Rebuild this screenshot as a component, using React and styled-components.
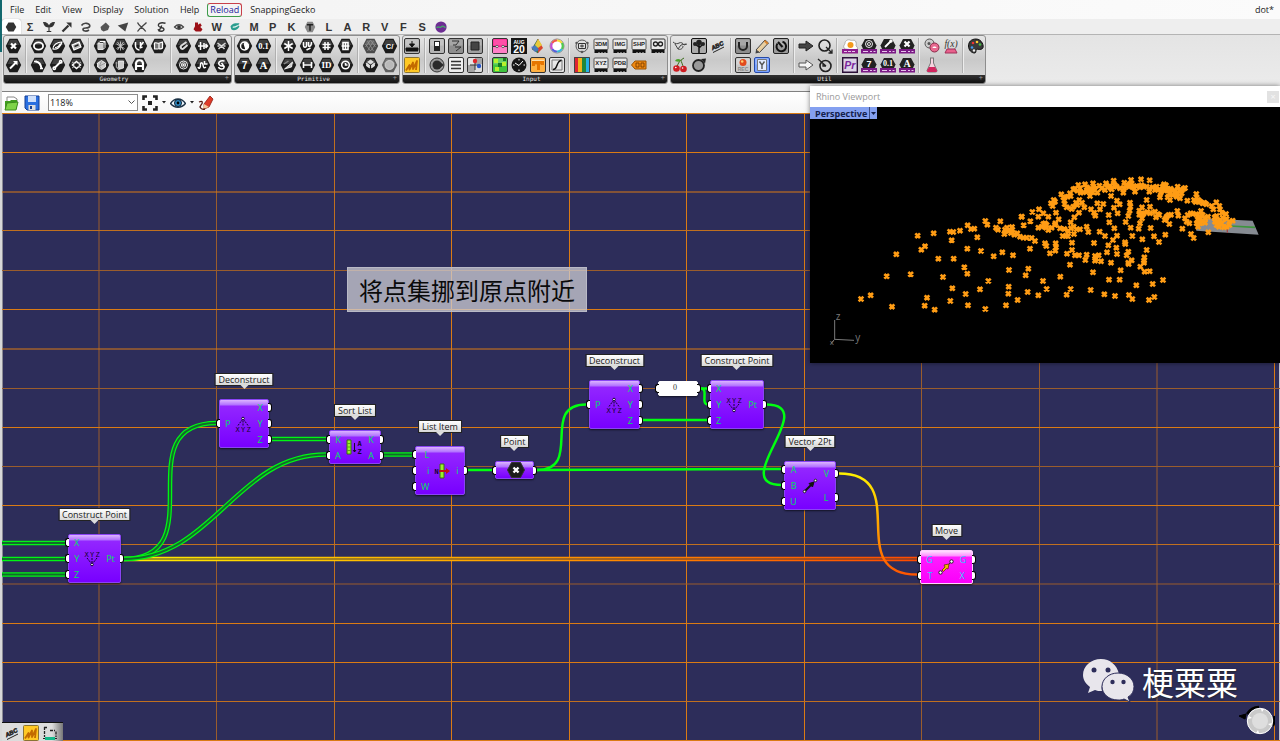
import React from "react";
import styled, { createGlobalStyle, css } from "styled-components";

const GlobalStyle = createGlobalStyle`
  * {
    box-sizing: border-box;
  }
  body {
    margin: 0;
    font-family: "Open Sans", "Noto Sans", "Noto Sans CJK SC", sans-serif;
    font-size: 9px;
    color: #1c1c1c;
  }
  button {
    padding: 0;
    border: 0;
    background: none;
    font: inherit;
    color: inherit;
  }
`;

/* ---------- icon bases ---------- */

const Hex = ({ children, fill = "#1b1b1b" }) => (
  <svg width="17" height="16" viewBox="0 0 16 16">
    <path d="M.3 8 4 .8h8L15.700 8 12 15.200H4z" fill={fill} />
    <path d="M2 7 4.600 2h6.800L14 7z" fill="#fff" opacity=".16" />
    <g fill="none" stroke="#fff" strokeWidth="1.500">
      {children}
    </g>
  </svg>
);

const Tile = ({ children, fill = "#b4b4b4", edge = "#333" }) => (
  <svg width="16" height="16" viewBox="0 0 16 16">
    <rect x=".5" y=".5" width="15" height="15" rx="1.500" fill={fill} stroke={edge} />
    <rect x="1.500" y="1.500" width="13" height="6" fill="#fff" opacity=".22" />
    {children}
  </svg>
);

const Chip = ({ label }) => (
  <svg width="16" height="16" viewBox="0 0 16 16">
    <path d="M1.500 11h13v4h-2v-1h-1v1h-2v-1h-1v1h-2v-1h-1v1h-4z" fill="#111" />
    <rect x="1" y="1" width="14" height="10.500" rx="1" fill="#e9e9e9" stroke="#555" />
    <text x="8" y="8.300" fontSize="5.800" fontWeight="700" textAnchor="middle" fontFamily="Liberation Sans, sans-serif" fill="#222">
      {label}
    </text>
  </svg>
);

const Plug = ({ children }) => (
  <svg width="16" height="16" viewBox="0 0 16 16">
    <path d="M.5 7.500 4 1h8l3.500 6.500L14 11H2z" fill="#222" />
    <g fill="none" stroke="#fff" strokeWidth="1.400">
      {children}
    </g>
    <path d="M0 11h16v4.500H0z" fill="#7b1a86" />
    <path d="M2 13.500h5M9 13.500h2M12.500 13.500h2" stroke="#e6c6ea" />
  </svg>
);

const Plain = ({ children, size = 16 }) => (
  <svg width={size} height={size} viewBox="0 0 16 16" fill="none">
    {children}
  </svg>
);

const Glyph = ({ children, y = 11.5, size = 10, serif }) => (
  <text
    x="8"
    y={y}
    fontSize={size}
    fontWeight="700"
    textAnchor="middle"
    fontFamily={serif ? "Liberation Serif, serif" : "Liberation Sans, sans-serif"}
    fill="#fff"
    stroke="none"
  >
    {children}
  </text>
);

const AutoMark = () => (
  <Plain>
    <rect x=".5" y=".5" width="15" height="15" rx="1" fill="#ffc824" stroke="#8a7434" />
    <path d="M2 13.500 5.500 8v4.500L9 5.500v6.500L13 4l-1 9" stroke="#c26a00" strokeWidth="1.800" strokeLinejoin="round" />
  </Plain>
);

const AbcMark = () => (
  <Plain>
    <text x="2" y="11.500" fontSize="6" fontStyle="italic" fontWeight="700" fontFamily="Liberation Sans, sans-serif" fill="#222" stroke="#222" strokeWidth=".5" transform="rotate(-26 4 11)">
      ABC
    </text>
    <path d="m3 14.500 11-5.500" stroke="#222" />
  </Plain>
);

/* ---------- ribbon contents: name -> drawing ---------- */

const icons = {
  Point: <Hex><path d="m5.500 5.500 5 5m0-5-5 5" strokeWidth="2.200" /></Hex>,
  Vector: <Hex><path d="m4.500 11.500 6-6" strokeWidth="2" /><path d="M7.500 4h4.500v4.500z" fill="#fff" stroke="none" /></Hex>,
  Circle: <Hex><ellipse cx="8" cy="8" rx="4.600" ry="3.600" strokeWidth="1.800" /></Hex>,
  "Circular Arc": <Hex><path d="M5 4.500c4 .5 5.500 3 6 7" strokeWidth="2" /><path d="M3.500 4.500h3M9.500 11.500h3" /></Hex>,
  Curve: <Hex><path d="M3.500 11c0-4 4-7 9-7-1 5-5 8-9 7zm2-1.500c2 0 4.500-2 5.500-4" strokeWidth="1.200" /></Hex>,
  Line: <Hex><path d="m5 11 6-6" strokeWidth="2" /><circle cx="4.800" cy="11.200" r="1.200" /><circle cx="11.200" cy="4.800" r="1.200" /></Hex>,
  Plane: <Hex><path d="m3.500 7 7-3 2 5-7 3z" fill="#bbb" strokeWidth="1.200" /><path d="m6 8.500 4-1.700" stroke="#222" /></Hex>,
  Rectangle: <Hex><path d="m8 4.500 4 3.500-4 3.500L4 8z" /><path d="m3.500 5 3 2m6 4-3-2m-6 2 3-2m6-4-3 2" strokeWidth="1" stroke="#bbb" /></Hex>,
  Box: <Hex><path d="M4.500 5.500h5v6h-5zl2-2h5v6l-2 2m0-6 2-2" strokeWidth="1" /><path d="M4.500 5.500h5v6h-5z" fill="#ccc" stroke="none" /></Hex>,
  Brep: <Hex><path d="m8 3.500 4 2.500v4l-4 2.500L4 10V6z" fill="#ccc" strokeWidth=".8" /><path d="m8 4-2 5 2 3.500M12 6 6 9" stroke="#888" strokeWidth=".7" /></Hex>,
  Mesh: <Hex><path d="M8 3.500v9M4 6l8 4.500M12 6l-8 4.500M5 4l6 8M11 4l-6 8" strokeWidth=".9" stroke="#ccc" /></Hex>,
  "Mesh Face": <Hex><path d="M6 4h5v7l-5 1.500z" fill="#ccc" strokeWidth=".7" /><path d="M4 5v5l2 2" stroke="#999" /></Hex>,
  SubD: <Hex><path d="M4 4v4c0 3 3 4 4 4m1-8v4l3-4m-4 6 3-1" /></Hex>,
  Surface: <Hex><path d="M4.500 13V7c0-5 7-5 7 0v6m-7-4h7" strokeWidth="2.200" /></Hex>,
  "Twisted Box": <Hex><path d="M4 5c2-1 3 1 5 0l3-1v6c-2 2-3 0-5 1H4zm4.500 0v6" fill="#777" strokeWidth="1.200" /></Hex>,
  Field: <Hex><path d="M11 4 6 7.500C4 9 6 12 8 10.500L12 7" strokeWidth="2" stroke="#ddd" /></Hex>,
  Spiral: <Hex><circle cx="8" cy="8" r="4" strokeWidth=".9" /><circle cx="8" cy="8" r="2.200" strokeWidth=".9" /><circle cx="8" cy="8" r=".5" /></Hex>,
  Geometry: <Hex><path d="M3.500 8h9M6 4v8M9.500 5v6M11 6l2 2-2 2" strokeWidth="1.500" /></Hex>,
  "Geometry Cache": <Hex><path d="M3.500 10c1 2.500 2.500 1 2.500-2s2-3 2.500 0 1 3.500 3 2M10 4v3h3" strokeWidth="1.500" /></Hex>,
  Group: <Hex><path d="m4 5 4 3 4-3M5 11l3-3 3 3M4 8h2m4 0h2" strokeWidth="1.500" stroke="#ddd" /></Hex>,
  Transform: <Hex><path d="M11 4c-5-1-7 2-5 4s5 0 4.500 2.500S5.500 12 5 10M8 6l3 4" strokeWidth="1.500" /></Hex>,
  Boolean: <Hex><circle cx="8" cy="8" r="4" /><path d="M8 4a4 4 0 0 1 0 8c2-2-2-4 0-8" fill="#fff" stroke="none" /></Hex>,
  Integer: <Hex><Glyph>7</Glyph></Hex>,
  Number: <Hex><Glyph serif size={8.500} y={10.8}>0.1</Glyph></Hex>,
  Text: <Hex><Glyph serif size={11}>A</Glyph></Hex>,
  Colour: <Hex><path d="M8 3v10M3.800 5.500l8.400 5M12.200 5.500l-8.400 5" strokeWidth="1.500" /></Hex>,
  "Complex Number": <Hex><path d="m4 12 8-7-1 5z" fill="#ccc" strokeWidth=".8" /><path d="M3.500 7 8 4" stroke="#888" /></Hex>,
  Culture: <Hex><path d="M4 4v3c0 3 3 3 3 0V4m2 0v4c2 1 3-1 3-4M7 12l4-2" strokeWidth="1.500" /></Hex>,
  Domain: <Hex><path d="M4 8h8M4 5v6m8-6v6" strokeWidth="1.600" /></Hex>,
  Matrix: <Hex><path d="M6.500 4v8M9.500 4v8M4 6.500h8m-8 3h8" /></Hex>,
  Guid: <Hex><Glyph serif size={9} y={11}>ID</Glyph></Hex>,
  "Domain²": <Hex><path d="M5.500 4.500h5v7h-5zM4 8h8M8 4v8" strokeWidth="1.600" /></Hex>,
  Time: <Hex><circle cx="8" cy="8" r="3.800" /><path d="M8 6v2h2" /></Hex>,
  Shader: <Hex fill="#4b4b4b"><path d="m3 6 5 7M5 3l6 10M8 2l5 7M13 6l-5 7M11 3 5 13M8 2 3 9" strokeWidth=".7" stroke="#999" /></Hex>,
  Data: <Hex><path d="m8 3 3 2-3 2-3-2zM4 6l3 2v3L4 9zm8 0L9 8v3l3-2z" fill="#ddd" strokeWidth=".6" /></Hex>,
  "File Path": <Hex><Glyph size={7.5} y={10.6}>C/</Glyph></Hex>,
  Sphere: <Hex fill="#606060"><circle cx="8" cy="8" r="4.500" fill="#b9b9b9" stroke="#ddd" strokeWidth=".8" /></Hex>,

  "Item Picker": <Tile><path d="M8 3v5M5.500 6 8 9l2.500-3z" stroke="#111" fill="#111" /><path d="M2 10h12v2.500H2zM3 12.500v1.500m2-1.500V14m2-1.500V14m2-1.500V14m2-1.500V14m2-1.500V14" stroke="#111" fill="#111" /></Tile>,
  Scribble: <AutoMark />,
  "Boolean Toggle": <Tile><path d="M5 3h6v10H5z" fill="#222" /><path d="M6 4h4v4H6z" fill="#fff" /></Tile>,
  "Control Knob": <Plain><circle cx="8" cy="8" r="7" fill="#9a9a9a" stroke="#333" /><circle cx="8" cy="8" r="4.500" fill="#2a2a2a" /><path d="m11 5 4 3-4 3z" fill="#2a2a2a" /></Plain>,
  "Digit Scroller": <Tile fill="#8e8e8e"><path d="M4 3h7L8 7H5m2 2h6l-5 4" stroke="#333" fill="none" /></Tile>,
  Panel: <Tile fill="#eee"><path d="M3 4.500h10M3 8h10M3 11.500h10" stroke="#333" strokeWidth="1.400" /></Tile>,
  Button: <Tile fill="#a0a0a0"><path d="M4 4h8v8H4z" fill="#444" stroke="#222" /></Tile>,
  "MD Slider": <Tile fill="#ddd"><path d="M1 8h7v7H1zM8 1h7v6H8z" fill="#a6a6a6" /><path d="M8 3v10M3 8h10" stroke="#333" /><circle cx="8" cy="4" r="2.200" fill="#e0262b" /><circle cx="12" cy="9" r="2.200" fill="#2453c9" /></Tile>,
  Gradient: <Tile fill="#ff1f90"><path d="M1 9h14v6H1z" fill="#ff7fc6" /><path d="M1 8.500h3m8 0h3" stroke="#333" fill="none" /><circle cx="5" cy="8.500" r="1.200" fill="#fff" stroke="#333" strokeWidth=".7" /><circle cx="11" cy="8.500" r="1.200" fill="#fff" stroke="#333" strokeWidth=".7" /></Tile>,
  "Colour Picker": <Tile fill="#3fc43f"><path d="M2 2h4v4H2zm8 3h4v4h-4zM3 10h4v4H3z" fill="#b6f22c" /><path d="M6 6h4v4H6zm5-5h3v3h-3z" fill="#167c22" /></Tile>,
  Calendar: <Plain><path d="M0 0h16v16H0z" fill="#161616" /><text x="8" y="5.500" fontSize="5" fontWeight="700" textAnchor="middle" fill="#fff" fontFamily="Liberation Sans, sans-serif">AUG</text><text x="8" y="14.500" fontSize="10.500" fontWeight="700" textAnchor="middle" fill="#fff" fontFamily="Liberation Sans, sans-serif">20</text></Plain>,
  Clock: <Plain><circle cx="8" cy="8" r="7.500" fill="#161616" /><path d="M4 6l4 2.500L12 4M8 2v1.500M8 12.500V14M2 8h1.500M12.500 8H14" stroke="#fff" /></Plain>,
  "Colour Swatch": <Plain><path d="M8 1 2 11l6 4z" fill="#36a845" stroke="#333" strokeWidth=".6" /><path d="m8 1 5 9-5 5z" fill="#d8442c" /><path d="m1 9 5-2 3 5-4 2z" fill="#4c72d8" opacity=".8" /><path d="m8 1 4 6-4 3-3-3z" fill="#e8c93a" /></Plain>,
  "Image Sampler": <Tile fill="#ffb040"><path d="M2 4h12v4h-3V7.500h-1V13H7V7.500H5V9H2z" fill="#e77600" /><path d="M2 3.500h12" stroke="#ffe0a8" /></Tile>,
  "Colour Wheel": (
    <Plain>
      <circle cx="8" cy="8" r="7" fill="#fff" stroke="#888" />
      <path d="M8 2.500A5.500 5.500 0 0 1 12.800 5" stroke="#f5d83a" strokeWidth="2.200" />
      <path d="M12.800 5A5.500 5.500 0 0 1 12.800 11" stroke="#4fc94f" strokeWidth="2.200" />
      <path d="M12.800 11A5.500 5.500 0 0 1 8 13.500" stroke="#38b8d8" strokeWidth="2.200" />
      <path d="M8 13.500A5.500 5.500 0 0 1 3.200 11" stroke="#5560dd" strokeWidth="2.200" />
      <path d="M3.200 11A5.500 5.500 0 0 1 3.200 5" stroke="#c44fd0" strokeWidth="2.200" />
      <path d="M3.200 5A5.500 5.500 0 0 1 8 2.500" stroke="#f0584a" strokeWidth="2.200" />
    </Plain>
  ),
  "Graph Mapper": <Tile fill="#e4e4e4"><path d="M3 13h10V3M3 13V3h10" stroke="#777" fill="none" /><path d="M4 12.500c5 0 3-9 8.500-9" stroke="#111" strokeWidth="1.500" fill="none" /></Tile>,
  Atom: <Plain><circle cx="8" cy="8" r="6" stroke="#555" /><path d="M4.500 5.500h7v5h-7z" fill="#ddd" stroke="#333" /><path d="M6 8h4M8 6.500v3" stroke="#333" /><circle cx="2.500" cy="5" r="1.200" fill="#555" /><circle cx="13.500" cy="5" r="1.200" fill="#555" /><circle cx="8" cy="14" r="1.200" fill="#555" /></Plain>,
  Spectrum: <Plain><path d="M0 0h4v16H0z" fill="#e02531" /><path d="M4 0h4v16H4z" fill="#f2b21b" /><path d="M8 0h4v16H8z" fill="#23873a" /><path d="M12 0h4v16h-4z" fill="#27b2e8" /><path d="M.5.5h15v15H.5z" stroke="#444" /></Plain>,
  "Import 3DM": <Chip label="3DM" />,
  "Import Coordinates": <Chip label="XYZ" />,
  "Import Image": <Chip label="IMG" />,
  "Import PDB": <Chip label="PDB" />,
  "Import SHP": <Chip label="SHP" />,
  "Object Details": <Plain><path d="M.5 8 4 4h11v8H4z" fill="#f18a12" stroke="#9a5200" /><path d="M5 6h3v4H5zm5 0h3v4h-3z" stroke="#7c3d00" strokeWidth=".9" /></Plain>,
  "Read File": (
    <Plain>
      <path d="M1.500 11h13v4h-2v-1h-1v1h-2v-1h-1v1h-2v-1h-1v1h-4z" fill="#111" />
      <rect x="1" y="1" width="14" height="10.500" rx="1" fill="#e9e9e9" stroke="#333" />
      <circle cx="5.500" cy="6" r="2" stroke="#222" strokeWidth="1.300" />
      <circle cx="10.500" cy="6" r="2" stroke="#222" strokeWidth="1.300" />
    </Plain>
  ),

  Jump: <Plain><path d="M1 4c2 2 5 2 6 1m-4 1 3 5 3-4 5-1M7 5c2-1 4 0 5 2l3-1M6 11c2 1 5 0 5-3" stroke="#444" /></Plain>,
  "Cherry Picker": <Plain><path d="M5 10C6 6 8 3 12 1m-1 10c0-4-2-6-2-8" stroke="#3b6b1a" /><path d="M9 3c-3-2-5-1-6 1 3 1 5 1 6-1z" fill="#4ba32b" /><circle cx="4.500" cy="11.500" r="3.300" fill="#cf1d22" /><circle cx="11.500" cy="12" r="3.300" fill="#cf1d22" /><circle cx="3.800" cy="10.500" r=".8" fill="#fff" /><circle cx="10.600" cy="11" r=".8" fill="#fff" /></Plain>,
  "Param Viewer": <Tile fill="#aaa" edge="#111"><path d="M8 15V9L4 6m4 4 4-4M8 9V3" stroke="#111" strokeWidth="1.500" fill="none" /><circle cx="8" cy="4.500" r="2.800" fill="#222" /><circle cx="4" cy="6" r="2" fill="#222" /><circle cx="12" cy="6" r="2" fill="#222" /></Tile>,
  Galapagos: <Plain><circle cx="7.500" cy="8.500" r="5.500" fill="#999" stroke="#222" strokeWidth="1.800" /><path d="m10 2 5-.5-1 5z" fill="#222" /></Plain>,
  "Scribble Text": <AbcMark />,
  "Cluster Input": <Tile fill="#8d8d8d"><path d="M4 4v4a4 4 0 0 0 8 0V4" stroke="#222" strokeWidth="2" fill="none" /></Tile>,
  "Data Recorder": <Tile fill="#c9c9c9"><circle cx="8" cy="5.500" r="3.500" fill="#e34a1c" /><circle cx="7.200" cy="4.500" r="1.300" fill="#ffcf70" /><text x="8" y="14" fontSize="5" textAnchor="middle" fill="#888" fontWeight="700" fontFamily="Liberation Sans, sans-serif">REC</text></Tile>,
  Marker: <Plain><path d="m2 12 9-10 3.500 3L5.500 14.500z" fill="#e9cfa1" stroke="#444" /><path d="m2 12 3.500 2.500-4 1z" fill="#444" /><path d="m11 2 3.500 3-1.500 1.500-3-3z" fill="#d9822b" /></Plain>,
  "Stream Filter": <Tile fill="#7aa2ff" edge="#2449a8"><path d="M3.500 2.500h9v11h-9z" fill="#e3ebff" stroke="#777" /><path d="M5.500 4.500 8 8l2.500-3.500M8 8v4" stroke="#555" strokeWidth="1.400" fill="none" /></Tile>,
  Timer: <Tile fill="#9b9b9b" edge="#222"><path d="M4.500 5.500a4.800 4.800 0 1 0 5-1.700" stroke="#111" strokeWidth="2" fill="none" /><path d="m5 4 4.500 5" stroke="#111" strokeWidth="2" /></Tile>,
  "Data Dam": <Plain><path d="M1 6h7V3l7 5-7 5v-3H1z" fill="#444" stroke="#222" /></Plain>,
  Relay: <Plain><path d="M1 6h7V3l7 5-7 5v-3H1z" fill="#f4f4f4" stroke="#555" /></Plain>,
  Suirify: <Plain><circle cx="7.500" cy="7.500" r="5.500" stroke="#222" strokeWidth="1.600" /><path d="m9 9 6 6m-3.500 0H15v-3.500" stroke="#222" strokeWidth="1.300" /></Plain>,
  Trigger: <Plain><circle cx="8.500" cy="9" r="5.500" stroke="#222" strokeWidth="1.600" /><path d="m1 2 8 7m-3-3v3h3" stroke="#222" strokeWidth="1.300" /></Plain>,
  Egg: <Plain><path d="M3 11C0 8 3 7 3 5s3-4 5-3 5-1 6 2-1 3 1 5-2 3-2 3z" fill="#fff" stroke="#aaa" /><circle cx="8.500" cy="7" r="3" fill="#f39a1d" /><path d="M0 11h16v4.500H0z" fill="#8e1d8e" /><path d="M2 13.500h12" stroke="#e6c6ea" strokeDasharray="3 1" /></Plain>,
  Premiere: <Plain><path d="M.7.7h14.600v14.600H.7z" fill="#dcd3e6" stroke="#2b1038" strokeWidth="1.400" /><text x="7.800" y="12" fontSize="10.500" fontStyle="italic" fontWeight="700" textAnchor="middle" fill="#7a259c" fontFamily="Liberation Sans, sans-serif">Pr</text></Plain>,
  "Plug Spiral": <Plug><circle cx="8" cy="6" r="3.500" strokeWidth=".9" /><circle cx="8" cy="6" r="1.500" strokeWidth=".9" /></Plug>,
  "Plug Integer": <Plug><Glyph y={9.5} size={9}>7</Glyph></Plug>,
  "Plug Line": <Plug><path d="m5 9 6-6" strokeWidth="1.800" /><circle cx="11" cy="3" r="1" /></Plug>,
  "Plug Number": <Plug><Glyph serif y={9} size={8}>0.1</Glyph></Plug>,
  "Plug Point": <Plug><path d="m5.500 3.500 5 5m0-5-5 5" strokeWidth="2.200" /></Plug>,
  "Plug Text": <Plug><Glyph serif y={9.5} size={10}>A</Glyph></Plug>,
  Bubbles: <Plain><circle cx="5.500" cy="5.500" r="4.500" fill="#ccc" stroke="#555" /><circle cx="10.500" cy="9.500" r="4.500" fill="#e86a90" stroke="#8a2a48" /><circle cx="5" cy="5.500" r="1.500" fill="#555" /><path d="M8.500 10c0-2 4-2 4 0z" fill="#fff" /></Plain>,
  Flask: <Plain><path d="M6 1h4M6.500 1v5L3 13.500c0 1 .5 1.500 1.500 1.500h7c1 0 1.500-.5 1.500-1.500L9.500 6V1" fill="#f6d3df" stroke="#777" /><path d="M5 10h6l2 3.500c0 1-.5 1.500-1.500 1.500h-7c-1 0-1.500-.5-1.500-1.500z" fill="#d3265f" /></Plain>,
  Expression: <Plain><text x="8" y="9" fontSize="9.500" fontStyle="italic" textAnchor="middle" fill="#333" fontFamily="Liberation Serif, serif">f(x)</text><path d="m4 11-2 4h12l-2-4z" fill="#e8608c" stroke="#a03058" /></Plain>,
  Palette: <Plain><path d="M8 1C3 1 .5 4 .5 8s3 7 6 7c2 0 1-2.500 2-3.500s4 1 6-1S14 1 8 1z" fill="#3a3a3a" stroke="#111" /><circle cx="5" cy="5" r="1.300" fill="#e33" /><circle cx="9" cy="4" r="1.300" fill="#fc3" /><circle cx="12" cy="6.500" r="1.300" fill="#4b4" /><circle cx="4" cy="9.500" r="1.300" fill="#49e" /><circle cx="6" cy="12.500" r="1.200" fill="#eee" /></Plain>,
};

// every group lists its columns, top icon first
const panels = [
  {
    title: "Geometry",
    width: 229,
    groups: [
      [["Point", "Vector"]],
      [["Circle", "Circular Arc"], ["Curve", "Line"], ["Plane", "Rectangle"]],
      [["Box", "Brep"], ["Mesh", "Mesh Face"], ["SubD", "Surface"], ["Twisted Box"]],
      [["Field", "Spiral"], ["Geometry", "Geometry Cache"], ["Group", "Transform"]],
    ],
  },
  {
    title: "Primitive",
    width: 166,
    groups: [
      [["Boolean", "Integer"], ["Number", "Text"]],
      [["Colour", "Complex Number"], ["Culture", "Domain"], ["Matrix", "Guid"], ["Domain²", "Time"]],
      [["Shader", "Data"], ["File Path", "Sphere"]],
    ],
  },
  {
    title: "Input",
    width: 266,
    groups: [
      [["Item Picker", "Scribble"]],
      [["Boolean Toggle", "Control Knob"], ["Digit Scroller", "Panel"], ["Button", "MD Slider"]],
      [["Gradient", "Colour Picker"], ["Calendar", "Clock"], ["Colour Swatch", "Image Sampler"], ["Colour Wheel", "Graph Mapper"]],
      [["Atom", "Spectrum"], ["Import 3DM", "Import Coordinates"], ["Import Image", "Import PDB"], ["Import SHP", "Object Details"], ["Read File"]],
    ],
  },
  {
    title: "Util",
    width: 316,
    groups: [
      [["Jump", "Cherry Picker"], ["Param Viewer", "Galapagos"], ["Scribble Text"]],
      [["Cluster Input", "Data Recorder"], ["Marker", "Stream Filter"], ["Timer"]],
      [["Data Dam", "Relay"], ["Suirify", "Trigger"]],
      [["Egg", "Premiere"], ["Plug Spiral", "Plug Integer"], ["Plug Line", "Plug Number"], ["Plug Point", "Plug Text"]],
      [["Bubbles", "Flask"], ["Expression"]],
      [["Palette"]],
    ],
  },
];

const tabs = [
  ["Params", <Plain size={12}><path d="M1 8 4.500 2h7L15 8l-3.500 6h-7z" fill="#333" /></Plain>],
  ["Maths", "Σ"],
  ["Sets", <Plain size={12}><path d="M8 14V8C4 8 2 6 1 2c4 0 6 2 7 6 1-4 3-6 7-6-1 4-3 6-7 6M5 14h6" fill="#333" stroke="#333" strokeWidth="1.500" /></Plain>],
  ["Vector", <Plain size={12}><path d="m2 14 8-8" stroke="#333" strokeWidth="3" /><path d="M7 2h7v7z" fill="#333" /></Plain>],
  ["Curve", <Plain size={12}><path d="M2 6c3-5 12-3 11 1s-9 1-9 4 5 3 8 1" stroke="#444" strokeWidth="2.200" /></Plain>],
  ["Surface", <Plain size={12}><path d="m2 8 7-6 5 5-2 5-6 2-3-2z" fill="#555" /></Plain>],
  ["Mesh", <Plain size={12}><path d="m1 6 14-4-4 12z" fill="#444" /></Plain>],
  ["Intersect", <Plain size={12}><path d="M2 2c2 5 7 6 11 12M14 2C10 6 6 8 2 14" stroke="#444" strokeWidth="1.800" /></Plain>],
  ["Transform", <Plain size={12}><path d="M14 3C7 1 3 4 5 7s7 1 7 4-7 4-8 0M9 6 5 14" stroke="#333" strokeWidth="1.800" /></Plain>],
  ["Display", <Plain size={12}><path d="M2 8c4-4 8-4 12 0-4 4-8 4-12 0z" stroke="#444" strokeWidth="1.600" /><circle cx="8" cy="8" r="2.500" fill="#333" /></Plain>],
  ["Kangaroo", <Plain size={12}><path d="M4 2h4v3l3-2 2 3-2 2 3 3-2 3H5l-3-3 2-4z" fill="#9c1017" /></Plain>],
  ["Weaverbird", "W"],
  ["Lunchbox", <Plain size={12}><path d="M2 7c3-5 8-4 12-4l-2 3 2 1c-2 5-8 7-11 4z" fill="#2a9d8f" /><path d="M5 8c3 1 5-1 7-2" stroke="#e6f4f0" strokeWidth="1.500" /></Plain>],
  ["Mosquito", "M"],
  ["Pufferfish", "P"],
  ["Karamba", "K"],
  ["TT Toolbox", <Plain size={12}><path d="M1 8 4.500 1h7L15 8l-3.500 7h-7z" fill="#888" /><path d="M4 5h8M8 5v8" stroke="#222" strokeWidth="2" /></Plain>],
  ["Ladybug", "L"],
  ["Anemone", "A"],
  ["Rabbit", "R"],
  ["V-Ray", "V"],
  ["Fologram", "F"],
  ["Squid", "S"],
  ["Gecko", <Plain size={12}><circle cx="8" cy="8" r="7.500" fill="#6c2c92" /><path d="M2 9c3-3 4 1 6-1s4-1 6 1" stroke="#46a36a" strokeWidth="1.800" /></Plain>],
];

/* ---------- header ---------- */

const Shell = styled.div`
  position: relative;
  display: flex;
  flex-direction: column;
  min-height: 100vh;
  padding-left: 2px;
  overflow: hidden;
  background: linear-gradient(#12686e 52px, #d8d8d8 52px);
`;

const MenuBar = styled.nav`
  display: flex;
  align-items: center;
  gap: 11px;
  height: 19px;
  padding: 0 6px 0 8px;
  background: linear-gradient(90deg, #f3f3f3, #fbfbfb);
  line-height: 12px;
`;

const MenuItem = styled.button`
  color: ${(p) => (p.$hot ? "#1a1a9c" : "#1c1c1c")};
  ${(p) =>
    p.$hot &&
    css`
      margin: 0 -3px;
      padding: 0 2px;
      border: 1px solid;
      border-color: #c8404a #c8404a #3f9c4c #3f9c4c;
      border-radius: 3px;
    `}
`;

const DocumentName = styled.span`
  margin-left: auto;
`;

const TabRow = styled.div`
  background: #eee;
`;

const TabStrip = styled.div`
  display: flex;
  width: 448px;
  height: 15px;
`;

const Tab = styled.button`
  display: flex;
  flex: 1;
  align-items: center;
  justify-content: center;
  font: bold 11px "Liberation Sans", sans-serif;
  color: #333;
  border-radius: 3px 3px 0 0;
  background: ${(p) => (p.$active ? "#fff" : "none")};
  box-shadow: ${(p) => (p.$active ? "0 0 1px #888" : "none")};
`;

const Ribbon = styled.div`
  display: flex;
  gap: 2px;
  height: 57px;
  padding: 0 1px;
  align-items: flex-start;
  border-top: 1px solid #b4b4b4;
  background: linear-gradient(#e4e4e4, #ececec);
`;

const Panel = styled.section`
  width: ${(p) => p.$width}px;
  flex: none;
  border: 1px solid #8d8d8d;
  border-radius: 3px;
  overflow: hidden;
  background: linear-gradient(#e6e6e6, #c9c9c9 50%, #dcdcdc);
`;

const PanelBody = styled.div`
  display: flex;
  height: 39px;
`;

const Group = styled.div`
  flex: ${(p) => p.$cols} 1 0;
  display: grid;
  grid-template-rows: 19px 19px;
  grid-auto-flow: column;
  grid-auto-columns: 1fr;
`;

const Divider = styled.i`
  width: 2px;
  margin: 2px;
  border-left: 1px solid #b0b0b0;
  border-right: 1px solid #ededed;
`;

const IconButton = styled.button`
  display: flex;
  align-items: center;
  justify-content: center;
  grid-row: ${(p) => p.$row};
  min-width: 0;

  svg {
    flex: none;
  }
`;

const Caption = styled.div`
  position: relative;
  display: flex;
  justify-content: center;
  height: 8px;
  padding-right: 7px;
  background: linear-gradient(#333, #111);
  color: #e8e8e8;
  font: 6px/7px "DejaVu Sans Mono", monospace;

  &::after {
    content: "+";
    position: absolute;
    right: 2px;
    font-size: 7px;
    color: #999;
  }
`;

/* ---------- toolbar ---------- */

const Toolbar = styled.div`
  display: flex;
  align-items: center;
  gap: 4px;
  height: 22px;
  padding: 0 2px;
  border-top: 1px solid #808080;
  background: linear-gradient(#fff, #f6f6f6);
`;

const ToolButton = styled.button`
  display: flex;
  align-items: center;
  gap: 4px;
  min-width: 16px;
`;

const ZoomBox = styled.span`
  position: relative;
  display: flex;
  margin-left: 4px;

  svg {
    position: absolute;
    right: 3px;
    top: 6px;
    pointer-events: none;
  }
`;

const ZoomSelect = styled.select`
  appearance: none;
  width: 90px;
  height: 17px;
  padding: 0 1px;
  border: 1px solid #8c8c8c;
  border-radius: 0;
  background: #fff;
  color: #222;
  font: inherit;
`;

const Caret = () => (
  <svg width="4" height="3" viewBox="0 0 4 3">
    <path d="M0 0h4L2 2.500z" fill="#222" />
  </svg>
);

/* ---------- canvas ---------- */

const Canvas = styled.main`
  position: relative;
  flex: 1;
  min-height: 627px;
  overflow: hidden;
  background: #2d2d5a;
  box-shadow: inset 1px 0 #8a8a94, inset -1px 0 #c4c4cc;
`;

const Wires = styled.svg`
  position: absolute;
  inset: 0;
  width: 100%;
  height: 100%;
`;

const BRIGHT = "#da7b14";
const DIM = "#9a5d2c";

const gridX = [
  [97, DIM],
  [214.5, DIM],
  [332.5, "#c0701f"],
  [449.5, BRIGHT],
  [567.5, BRIGHT],
  [684.5, BRIGHT],
  [802.5, BRIGHT],
  [919.5, DIM],
  [1037.5, DIM],
  [1155, DIM],
  [1272.5, BRIGHT],
];
const gridY = [
  [0.5, BRIGHT],
  [39.5, BRIGHT],
  [79, BRIGHT],
  [117.5, "#c0701f"],
  [157.5, DIM],
  [196.5, BRIGHT],
  [236, BRIGHT],
  [275.5, DIM],
  [314.5, BRIGHT],
  [353.5, DIM],
  [392.5, BRIGHT],
  [431.5, "#c0701f"],
  [471, DIM],
  [510.5, BRIGHT],
  [549.5, BRIGHT],
  [588.5, "#c0701f"],
  [627.5, BRIGHT],
];

const Double = ({ d, outer = "#00f614", inner = "#136a2c" }) => (
  <>
    <path d={d} stroke={outer} strokeWidth="4.500" />
    <path d={d} stroke={inner} strokeWidth="2" />
  </>
);

const WireLayer = () => (
  <Wires fill="none">
    <defs>
      <linearGradient id="long" gradientUnits="userSpaceOnUse" x1="121" y1="0" x2="915" y2="0">
        <stop offset="0" stopColor="#ffee00" />
        <stop offset="1" stopColor="#ff4a00" />
      </linearGradient>
      <linearGradient id="longCore" gradientUnits="userSpaceOnUse" x1="121" y1="0" x2="915" y2="0">
        <stop offset="0" stopColor="#a49a1c" />
        <stop offset="1" stopColor="#a4401e" />
      </linearGradient>
      <linearGradient id="drop" gradientUnits="userSpaceOnUse" x1="0" y1="360" x2="0" y2="462">
        <stop offset="0" stopColor="#fff200" />
        <stop offset="1" stopColor="#ff5500" />
      </linearGradient>
    </defs>
    {gridX.map(([x, tone]) => (
      <path key={x} d={`M${x} 0V2000`} stroke={tone} />
    ))}
    {gridY.map(([y, tone]) => (
      <path key={y} d={`M0 ${y}H4000`} stroke={tone} />
    ))}
    <Double d="M0 430H65" />
    <Double d="M0 446H65" />
    <Double d="M0 461.500H65" />
    <Double d="M121 446H915" outer="url(#long)" inner="url(#longCore)" />
    <Double d="M121 446C215 446 121 310 215 310" />
    <Double d="M121 446C212 446 234 341.500 324 341.500" />
    <Double d="M270 326H324" />
    <Double d="M381 341.500H411" />
    <g stroke="#00ff10" strokeWidth="2.500">
      <path d="M465 357H491" />
      <path d="M535 357C582 357 537 291.500 584 291.500" />
      <path d="M535 357L780 356" />
      <path d="M640 307H706" />
      <path d="M699 275.500H706" />
      <path d="M699 275.500C707 275.500 698 291.500 706 291.500" />
      <path d="M764 291.500C820 291.500 724 372 780 372" />
    </g>
    <path d="M837 360.500C912 360.500 840 461.500 915 461.500" stroke="url(#drop)" strokeWidth="2.500" />
  </Wires>
);

const NodeBox = styled.article`
  position: absolute;
  left: ${(p) => p.$x}px;
  top: ${(p) => p.$y}px;
  width: ${(p) => p.$w}px;
  height: ${(p) => p.$h}px;
  display: flex;
  justify-content: space-between;
  border: 1px solid ${(p) => (p.$selected ? "#ffd0ff" : "#8a44f4")};
  border-radius: 2px;
  box-shadow: 0 1px 2px rgba(0, 0, 0, 0.6);
  color: ${(p) => (p.$selected ? "#2cc8ff" : "#00e060")};
  background: ${(p) =>
    p.$selected
      ? "linear-gradient(#ffe0ff, #ff8cff 5px, #ff1cff 6px, #fa00fa)"
      : "linear-gradient(#dcb4ff, #b070ff 5px, #9326ff 6px, #7800ff)"};
`;

const Tag = styled.h2`
  position: absolute;
  left: 50%;
  top: -27px;
  transform: translateX(-50%);
  margin: 0;
  padding: 0 3px;
  border: 1px solid #222;
  background: linear-gradient(#fff, #d8d8d8);
  color: #1a1a1a;
  font-size: 9px;
  font-weight: 400;
  line-height: 11px;
  white-space: nowrap;

  &::after {
    content: "";
    position: absolute;
    left: 50%;
    top: 100%;
    margin-left: -4px;
    border: 4px solid transparent;
    border-top-color: #ddd;
    border-bottom: 0;
  }
`;

const Ports = styled.ul`
  display: flex;
  flex-direction: column;
  margin: 0;
  padding: 0 ${(p) => p.$pad}px;
  list-style: none;
`;

const Port = styled.li`
  flex: 1;
  display: flex;
  align-items: center;
  justify-content: ${(p) => (p.$side === "left" ? "flex-end" : "flex-start")};
  line-height: 9px;

  &::before {
    content: "";
    position: absolute;
    ${(p) => p.$side}: -4px;
    width: 3px;
    height: 7px;
    border: 1px solid #000;
    border-${(p) => (p.$side === "left" ? "right" : "left")}: 0;
    border-radius: ${(p) => (p.$side === "left" ? "3px 0 0 3px" : "0 3px 3px 0")};
    background: #fff;
  }
`;

const NodeIcon = styled.div`
  display: flex;
  align-items: center;
`;

const xyzText = { fontSize: 7, fontFamily: "DejaVu Sans Mono, monospace", fill: "#14042c", textAnchor: "middle" };

const nodeIcons = {
  construct: (
    <svg width="16" height="16" viewBox="0 0 16 16">
      <text {...xyzText} x="2.500" y="5.500">X</text>
      <text {...xyzText} x="8" y="5.500">Y</text>
      <text {...xyzText} x="13.500" y="5.500">Z</text>
      <path d="M3 7 7 12M8 7V12M13 7 9 12" stroke="#14042c" strokeDasharray="2 1" />
      <circle cx="8" cy="13.500" r="1.300" fill="#fff" stroke="#14042c" />
    </svg>
  ),
  deconstruct: (
    <svg width="16" height="16" viewBox="0 0 16 16">
      <text {...xyzText} x="2.500" y="15.500">X</text>
      <text {...xyzText} x="8" y="15.500">Y</text>
      <text {...xyzText} x="13.500" y="15.500">Z</text>
      <path d="M3 9.500 7 4M8 9.500V4M13 9.500 9 4" stroke="#14042c" strokeDasharray="2 1" />
      <circle cx="8" cy="2.500" r="1.300" fill="#fff" stroke="#14042c" />
    </svg>
  ),
  sort: (
    <svg width="16" height="16" viewBox="0 0 16 16">
      <path d="M1 1h4v14H1z" fill="#9af02c" stroke="#3b6b12" />
      <path d="M1 4.500h4M1 8h4M1 11.500h4" stroke="#5aa316" />
      <path d="M8.500 4v9m-1.500-2 1.500 2 1.500-2" stroke="#160626" fill="none" />
      <text {...xyzText} x="13.500" y="7" fontWeight="700">A</text>
      <text {...xyzText} x="13.500" y="15" fontWeight="700">Z</text>
    </svg>
  ),
  item: (
    <svg width="16" height="16" viewBox="0 0 16 16">
      <path d="M6 1h4v14H6z" fill="#9af02c" stroke="#3b6b12" />
      <text {...xyzText} x="2.500" y="10.500" fontWeight="700">N</text>
      <path d="M5 8h8" stroke="#c21016" strokeWidth="2" />
      <path d="m12 5 4 3-4 3z" fill="#c21016" />
    </svg>
  ),
  point: (
    <svg width="20" height="16" viewBox="0 0 20 16">
      <path d="M1.500 8 5.500 .5h9L18.500 8l-4 7.500h-9z" fill="#1c1c1c" stroke="#333" />
      <path d="m7.500 5.500 5 5m0-5-5 5" stroke="#fff" strokeWidth="2.400" />
    </svg>
  ),
  vector: (
    <svg width="16" height="16" viewBox="0 0 16 16">
      <path d="m3 13 7-7" stroke="#111" strokeWidth="2" />
      <path d="m12 4-1.500 5L7 5.500z" fill="#111" stroke="#111" />
      <circle cx="2.500" cy="13.500" r="1.300" fill="#fff" stroke="#222" />
      <circle cx="13.500" cy="2.500" r="1.300" fill="#fff" stroke="#222" />
    </svg>
  ),
  move: (
    <svg width="16" height="16" viewBox="0 0 16 16">
      <path d="M2 14 14 2" stroke="#333" />
      <path d="m4 11 3-3-1-2 5-1-1 5-1.500-.5-3 3z" fill="#f5b800" stroke="#6a3a00" strokeWidth=".8" />
      <circle cx="2.500" cy="13.500" r="1.700" fill="#fff" stroke="#222" />
      <circle cx="13.500" cy="2.500" r="1.700" fill="#fff" stroke="#222" />
    </svg>
  ),
};

const nodes = [
  { tag: "Construct Point", icon: "construct", x: 66, y: 421, w: 53, h: 49, ins: ["X", "Y", "Z"], outs: ["Pt"] },
  { tag: "Deconstruct", icon: "deconstruct", x: 217, y: 286, w: 50, h: 49, ins: ["P"], outs: ["X", "Y", "Z"] },
  { tag: "Sort List", icon: "sort", x: 327, y: 317, w: 52, h: 34, ins: ["K", "A"], outs: ["K", "A"] },
  { tag: "List Item", icon: "item", x: 413, y: 333, w: 50, h: 49, ins: ["L", "i", "W"], outs: ["i"] },
  { tag: "Point", icon: "point", x: 493, y: 348, w: 39, h: 18, ins: [""], outs: [""] },
  { tag: "Deconstruct", icon: "deconstruct", x: 587, y: 267, w: 51, h: 49, ins: ["P"], outs: ["X", "Y", "Z"] },
  { tag: "Construct Point", icon: "construct", x: 708, y: 267, w: 54, h: 49, ins: ["X", "Y", "Z"], outs: ["Pt"] },
  { tag: "Vector 2Pt", icon: "vector", x: 782, y: 348, w: 52, h: 49, ins: ["A", "B", "U"], outs: ["V", "L"] },
  { tag: "Move", icon: "move", x: 918, y: 437, w: 53, h: 34, ins: ["G", "T"], outs: ["G", "X"], selected: true },
];

const Node = ({ tag, icon, x, y, w, h, ins, outs, selected }) => (
  <NodeBox $x={x} $y={y} $w={w} $h={h} $selected={selected}>
    <Tag>{tag}</Tag>
    <Ports $side="left" $pad={5}>
      {ins.map((name, i) => (
        <Port key={i} $side="left">{name}</Port>
      ))}
    </Ports>
    <NodeIcon>{nodeIcons[icon]}</NodeIcon>
    <Ports $side="right" $pad={icon === "point" ? 5 : 6}>
      {outs.map((name, i) => (
        <Port key={i} $side="right">{name}</Port>
      ))}
    </Ports>
  </NodeBox>
);

const ValuePanel = styled(NodeBox)`
  border-color: #fff;
  background: #fff;
  color: #333;
  font-family: "Liberation Serif", serif;
  font-size: 8px;
  line-height: 12px;
`;

const Note = styled.p`
  position: absolute;
  left: 345px;
  top: 154px;
  margin: 0;
  padding: 0 11px;
  border: 1px solid #b9b9c6;
  background: rgba(205, 205, 212, 0.75);
  color: #0a0a0a;
  font: 24px/43px "Noto Sans CJK SC", sans-serif;
`;

const MarkovBar = styled.div`
  position: absolute;
  left: 0;
  bottom: 0;
  display: flex;
  align-items: center;
  gap: 3px;
  height: 19px;
  padding: 1px 5px 0 2px;
  border-top: 1px solid #111;
  background: linear-gradient(90deg, #dcdcdc 50px, #777 61px);

  button {
    display: flex;
  }
`;

const Compass = styled.svg`
  position: absolute;
  right: 5px;
  bottom: 4px;
`;

const Watermark = styled.div`
  position: absolute;
  right: 42px;
  bottom: 35px;
  display: flex;
  align-items: center;
  gap: 7px;
  color: #fff;
  font: 32px/50px "Noto Sans CJK SC", sans-serif;
  text-shadow: 0 1px 2px #222;
`;

/* ---------- Rhino viewport ---------- */

const Window = styled.aside`
  position: absolute;
  top: 86px;
  right: 0;
  width: 470px;
  display: flex;
  flex-direction: column;
  background: #000;
  box-shadow: 0 0 5px rgba(0, 0, 0, 0.5);
`;

const WindowTitle = styled.header`
  display: flex;
  align-items: center;
  justify-content: space-between;
  height: 21px;
  padding: 0 1px 0 6px;
  background: #fff;
  color: #999;
`;

const CloseButton = styled.button`
  width: 12px;
  height: 12px;
  background: #e2e2e2;
  color: #f8f8f8;
  line-height: 10px;
`;

const ViewName = styled.button`
  position: absolute;
  left: 0;
  top: 21px;
  display: flex;
  align-items: center;
  gap: 2px;
  height: 12px;
  padding: 0 1px 0 5px;
  background: #84a0f0;
  color: #14204c;
  font-weight: 700;
  line-height: 11px;

  svg {
    border-left: 1px solid #3c4c84;
    padding-left: 1px;
  }
`;

// drawing units are a third of a pixel
const farPoints =
  "338,455 386,448 274,511 349,497 360,487 400,524 446,524 245,577 317,571 414,579 168,645 197,634 261,668 366,641 359,665 389,677 436,651 442,613 482,630 489,664 541,675 478,550 487,569 525,616 550,591 603,664 611,608 610,629 612,558 638,648 668,624 662,574 670,554 700,634 725,615 714,591 766,578 785,632 797,615 857,618 898,631 930,636 972,633 982,645 1032,648 1048,639 994,604 1043,600 1074,588 912,587 944,587 435,443 445,444 465,440 440,469 488,424 498,435 508,434 541,411 547,422 586,412 573,431 579,437 517,460 487,494 528,501 566,517 592,505 624,514 675,494 650,398 682,384 676,412 656,424 621,429 600,437 610,442 618,447 628,452 637,448 645,458 655,461 665,461 680,462 690,471 598,450 606,431 622,437";

const hillPoints =
  "175,75 165,86 172,92 160,88 180,85 182,98 195,73 200,82 205,93 190,97 219,70 212,85 222,84 218,97 210,108 225,90 238,77 232,98 245,85 258,70 262,82 255,90 270,78 281,62 284,75 275,88 290,80 300,85 310,98 313,68 318,76 312,85 333,60 330,72 327,80 335,70 340,82 345,95 350,78 363,58 365,76 360,82 372,80 389,61 380,80 388,86 388,95 398,82 405,90 410,80 418,88 422,98 420,112 432,73 428,80 438,76 434,92 440,88 448,100 443,112 450,120 452,86 458,105 465,92 473,80 473,100 470,110 478,92 480,115 491,86 485,100 495,84 502,122 273,108 124,103 130,112 133,122 134,132 150,100 143,110 152,108 140,142 93,130 105,125 101,120 98,138 108,158 57,148 70,160 55,170 85,170 5,170 75,190 116,178 155,147 160,140 172,135 168,128 178,120 186,128 177,158 163,172 152,187 193,142 213,148 222,158 226,167 232,130 250,132 240,148 266,165 268,187 291,122 299,133 282,143 293,160 283,205 330,128 331,140 329,152 325,168 317,186 332,203 380,120 390,140 382,156 390,160 366,142 358,152 365,160 358,164 370,162 366,175 360,190 356,206 392,204 405,155 408,172 413,162 418,165 434,180 440,170 446,165 438,175 453,164 448,192 436,224 402,229 417,246 367,238 337,228 472,153 475,167 487,206 495,175 500,185 508,190 503,165 512,160 519,161 528,163 529,102 530,112 522,120 527,126 535,120 541,125 548,130 553,128 559,133 543,153 540,168 548,165 533,178 530,190 534,200 541,190 547,182 555,188 556,175 564,170 575,138 580,148 589,127 598,138 600,148 606,158 618,162 584,172 590,168 600,180 608,173 620,177 585,185 590,195 597,200 605,190 612,202 620,200 628,195 628,185 638,182 565,217 513,222 521,234 55,203 65,200 70,192 78,203 85,210 80,195 95,203 105,195 106,190 120,205 133,207 128,228 138,227 145,213 153,205 161,200 162,222 170,208 180,208 200,200 205,216 239,215 255,228 156,248 144,228 222,249 75,250 79,258 107,250 108,262 106,272 90,280 141,281 156,270 165,286 177,286 150,314 200,284 196,300 225,288 228,296 236,286 225,302 243,304 273,308 261,277 265,256 279,240 291,227 289,263 291,282 315,247 316,252 325,275 320,286 335,301 325,308 326,312 302,331 219,337 380,270 373,292 372,302 372,308 361,320 374,335 389,334";

const crosses = (list) =>
  list
    .split(" ")
    .map((p) => {
      const [x, y] = p.split(",").map(Number);
      return `M${x - 7} ${y - 7}l14 14m0-14l-14 14`;
    })
    .join("");

const Scene = () => (
  <svg viewBox="15 69 1410 768" width="100%" fill="none" fontSize="30" fontFamily="Open Sans, sans-serif">
    <path d="M1173 402 1343 410 1361 452 1174 440z" fill="#868b92" />
    <path d="M1275 426 1350 430" stroke="#3c963c" strokeWidth="5" />
    <path d="M1267 430V446" stroke="#a04848" strokeWidth="4" />
    <path d={crosses(farPoints)} stroke="#ff9c14" strokeWidth="8" />
    <path d={crosses(hillPoints)} stroke="#ff9c14" strokeWidth="8" transform="translate(645 228)" />
    <path d="M89 708V766L147 769M89 766 78 778" stroke="#7a7a7a" strokeWidth="3" />
    <g fill="#7a7a7a">
      <text x="92" y="709">z</text>
      <text x="151" y="770">y</text>
      <text x="74" y="782" fontSize="24">x</text>
    </g>
  </svg>
);

const menu = ["File", "Edit", "View", "Display", "Solution", "Help", "Reload", "SnappingGecko"];

export default function App() {
  return (
    <Shell>
      <GlobalStyle />
      <MenuBar>
        {menu.map((name) => (
          <MenuItem key={name} $hot={name === "Reload"}>{name}</MenuItem>
        ))}
        <DocumentName>dot*</DocumentName>
      </MenuBar>

      <TabRow>
        <TabStrip>
          {tabs.map(([name, face], i) => (
            <Tab key={name} $active={i === 0} aria-label={name}>{face}</Tab>
          ))}
        </TabStrip>
      </TabRow>

      <Ribbon>
        {panels.map(({ title, width, groups }) => (
          <Panel key={title} $width={width}>
            <PanelBody>
              {groups.map((group, i) => (
                <React.Fragment key={i}>
                  {i > 0 && <Divider />}
                  <Group $cols={group.length}>
                    {group.flatMap((column) =>
                      column.map((name, row) => (
                        <IconButton key={name} $row={row + 1} aria-label={name}>
                          {icons[name]}
                        </IconButton>
                      ))
                    )}
                  </Group>
                </React.Fragment>
              ))}
            </PanelBody>
            <Caption>{title}</Caption>
          </Panel>
        ))}
      </Ribbon>

      <Toolbar>
        <ToolButton aria-label="Open">
          <Plain>
            <path d="M3 2h7l3 2v4H3z" fill="#fff" stroke="#888" />
            <path d="M1 6h5l1-1h6v9H1z" fill="#3f9c1e" />
            <path d="m3 8 11-1-2 8H1z" fill="#7ed348" stroke="#3a8a1c" />
          </Plain>
        </ToolButton>
        <ToolButton aria-label="Save">
          <Plain>
            <path d="M1 1h14v14H3l-2-2z" fill="#2a6fe0" stroke="#143f94" />
            <path d="M4 1h8v6H4z" fill="#cfe0fb" />
            <path d="M4.500 10h7v5h-7z" fill="#ddd" />
            <path d="M6 11h2v3H6z" fill="#143f94" />
          </Plain>
        </ToolButton>
        <ZoomBox>
          <ZoomSelect aria-label="Zoom" defaultValue="118%">
            <option>118%</option>
            <option>100%</option>
          </ZoomSelect>
          <svg width="7" height="5" viewBox="0 0 7 5" fill="none">
            <path d="m.5.5 3 3 3-3" stroke="#555" />
          </svg>
        </ZoomBox>
        <ToolButton aria-label="Zoom extents">
          <Plain>
            <path d="M1.500 5V1.500H5m6 0h3.500V5m0 6v3.500H11m-6 0H1.500V11" stroke="#222" strokeWidth="2.600" />
            <path d="M6 6h4v4H6z" fill="#222" />
          </Plain>
          <Caret />
        </ToolButton>
        <ToolButton aria-label="Preview">
          <Plain>
            <path d="M.5 8.500c4-6 11-6 15 0-4 5-11 5-15 0z" fill="#eaf4fb" stroke="#1d3346" strokeWidth="1.400" />
            <circle cx="8" cy="8" r="3.500" fill="#2c8cc8" stroke="#123" />
            <circle cx="8" cy="8" r="1.400" fill="#000" />
          </Plain>
          <Caret />
        </ToolButton>
        <ToolButton aria-label="Sketch">
          <Plain>
            <path d="m6 9 6-8 3 3-4 8-5 2z" fill="#e03a28" stroke="#8c1c10" strokeWidth=".8" />
            <path d="m6 9-1 5 6-2z" fill="#f3c79a" />
            <path d="M1 7c4-2 4 1 2 3s0 5 4 4" stroke="#5a1c14" strokeWidth="1.300" />
          </Plain>
        </ToolButton>
      </Toolbar>

      <Canvas>
        <WireLayer />
        <Note>将点集挪到原点附近</Note>
        {nodes.map((node, i) => (
          <Node key={i} {...node} />
        ))}
        <ValuePanel $x={656} $y={268} $w={40} $h={15}>
          <Ports $side="left" $pad={0}>
            <Port $side="left" />
          </Ports>
          0
          <Ports $side="right" $pad={3}>
            <Port $side="right" />
          </Ports>
        </ValuePanel>

        <MarkovBar>
          <button aria-label="Scribble"><AbcMark /></button>
          <button aria-label="Sketch"><AutoMark /></button>
          <button aria-label="Dimensions">
            <Plain>
              <path d="M2.500 2v10M2 2.500h4M8 5.500h5m1 1V12" stroke="#222" strokeWidth="1.300" strokeDasharray="3 1" />
              <path d="M3 12h10v3H3z" fill="#16b98a" />
              <path d="M1 13.500h2m10 0h2" stroke="#222" />
            </Plain>
          </button>
        </MarkovBar>

        <Watermark>
          <svg width="52" height="46" viewBox="0 0 52 46">
            <path d="M18 1C8 1 0 8 0 17c0 5 3 9 7 12l-2 6 7-3c2 1 4 1 7 1-2-9 6-17 17-17C34 7 27 1 18 1z" fill="#e8e6ec" />
            <path d="M35 15c-9 0-16 6-16 13.500S26 42 35 42c2 0 4 0 6-1l6 3-2-5c4-2 6-6 6-10.500C51 21 44 15 35 15z" fill="#e8e6ec" stroke="#2d2d5a" />
            <g fill="#2d2d5a">
              <circle cx="11" cy="12" r="2.500" />
              <circle cx="25" cy="12" r="2.500" />
              <circle cx="29.500" cy="24" r="2.200" />
              <circle cx="40.500" cy="24" r="2.200" />
            </g>
          </svg>
          梗粟粟
        </Watermark>

        <Compass width="36" height="32" viewBox="0 0 36 32">
          <path d="M8 9a15 15 0 0 1 12-7M35 11a15 15 0 0 1-1 10" stroke="#000" strokeWidth="2.500" fill="none" />
          <path d="M0 11l7-2-1 5z" fill="#000" stroke="#000" />
          <circle cx="21" cy="16" r="12.700" fill="#c9c9c9" stroke="#fff" />
          <circle cx="21" cy="16" r="8" fill="#dedede" />
          <path d="m22 4 3 0-2 3zM33 18l-1 3-3-2zM20 28l-3 0 2-3zM9 14l1-3 3 2z" fill="#fff" />
        </Compass>
      </Canvas>

      <Window>
        <WindowTitle>
          Rhino Viewport
          <CloseButton aria-label="Close">×</CloseButton>
        </WindowTitle>
        <ViewName>
          Perspective
          <svg width="7" height="12" viewBox="0 0 5 12">
            <path d="M0 5h5L2.500 8z" fill="#14204c" />
          </svg>
        </ViewName>
        <Scene />
      </Window>
    </Shell>
  );
}
